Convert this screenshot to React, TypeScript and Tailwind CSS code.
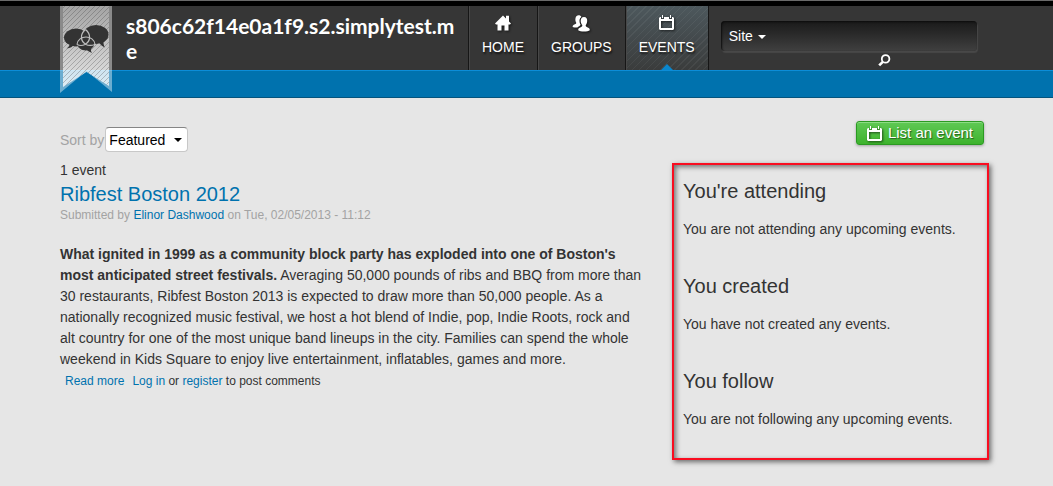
import { useState, type ReactNode } from 'react';

interface NavItem {
    label: string;
    icon: ReactNode;
}

interface SidebarBlock {
    title: string;
    text: string;
}

function HomeIcon() {
    return (
        <svg width="16" height="16" viewBox="0 0 16 16" fill="currentColor" aria-hidden="true">
            <path d="M8 0.5 L11 3.5 V0.8 H14 V6.5 L16 8.6 L15 9.6 H13.5 V15.5 H9.5 V10.5 H6.5 V15.5 H2.5 V9.6 H1 L0 8.6 Z" />
        </svg>
    );
}

function GroupsIcon() {
    return (
        <svg width="18" height="18" viewBox="0 0 18 18" fill="currentColor" aria-hidden="true">
            <path d="M6.6 0.3 C8 0.3 9 0.9 9.4 2 C7.6 3 7.3 5 7.6 7 C7.8 8.4 8.2 9.2 8.6 9.8 C8.2 11.2 6.4 11.2 5.4 12.6 C3.4 12.6 1.6 12.6 0.6 12 C0.6 10 2 9.6 3.4 9 C4.4 8.6 4.4 8 4 7.2 C3.2 6 3.2 4.4 3.6 2.8 C4 1.2 5 0.3 6.6 0.3 Z" />
            <path d="M12 2 C14.4 2 15.4 3.8 15.2 6 C15.1 7.8 14.6 9 13.8 10 C13.4 11.2 14 11.6 15.2 12.2 C16.8 12.8 17.8 13.4 17.8 15.2 C16 17 8 17 6.2 15.2 C6.2 13.4 7.2 12.8 8.8 12.2 C10 11.6 10.6 11.2 10.2 10 C9.4 9 8.8 7.8 8.7 6 C8.6 3.8 9.6 2 12 2 Z" />
        </svg>
    );
}

function CalendarIcon() {
    return (
        <svg width="15" height="15" viewBox="0 0 15 15" aria-hidden="true">
            <path
                d="M0 3 L1 2 H2 V4 H5 V2 H10 V4 H13 V2 H14 L15 3 V14 L14 15 H1 L0 14 Z M2 6 V13 H13 V6 Z"
                fill="currentColor"
                fillRule="evenodd"
            />
            <path d="M3 0 H4 V3 H3 Z M11 0 H12 V3 H11 Z" fill="currentColor" />
        </svg>
    );
}

function SearchIcon() {
    return (
        <svg width="13" height="13" viewBox="0 0 13 13" fill="none" stroke="currentColor" aria-hidden="true">
            <circle cx="7.6" cy="4.9" r="3.8" strokeWidth="1.8" />
            <path d="M4.8 7.8 L1.2 11.4" strokeWidth="2.6" />
        </svg>
    );
}

function Caret() {
    return (
        <svg width="8" height="4" viewBox="0 0 8 4" fill="currentColor" aria-hidden="true">
            <path d="M0 0 H8 L4 4 Z" />
        </svg>
    );
}

// Bookmark ribbon that hangs over the blue bar
function RibbonLogo() {
    return (
        <svg width="52" height="87" viewBox="0 0 52 87" aria-hidden="true">
            <defs>
                <linearGradient id="ribbonFill" x1="0" y1="0" x2="0" y2="1">
                    <stop offset="0" stopColor="#fff" stopOpacity="0.22" />
                    <stop offset="1" stopColor="#fff" stopOpacity="0.78" />
                </linearGradient>
                <pattern id="ribbonHatch" width="5" height="5" patternUnits="userSpaceOnUse">
                    <path d="M-1 1 L1 -1 M0 5 L5 0 M4 6 L6 4" stroke="#333" strokeOpacity="0.35" strokeWidth="0.8" />
                </pattern>
            </defs>
            <path d="M0 0 H52 V86 L26.5 65 L0 87 Z" fill="#fff" fillOpacity="0.42" />
            <path d="M3 0 H49 V80 L26.5 66 L3 81 Z" fill="url(#ribbonFill)" />
            <path d="M3 0 H49 V80 L26.5 66 L3 81 Z" fill="url(#ribbonHatch)" />
            <g fill="#333">
                <path d="M7 36 L10 38 Q9 41 6.5 42.5 Q12 42 14.5 38 Z" />
                <path d="M38 35 Q41 40 45 41.5 Q43 39 43.5 34 Z" />
                <path d="M25 42 Q28 46 32 47 Q30.5 45 31 41 Z" />
                <ellipse cx="16" cy="31.5" rx="12" ry="9" />
                <ellipse cx="36" cy="28.5" rx="12.5" ry="9.5" />
                <ellipse cx="25.8" cy="38" rx="8.5" ry="6.5" />
            </g>
            <g fill="none" stroke="#bdbdbd" strokeWidth="1.2">
                <path d="M25.5 23.5 C31 28 31 35 25 38.5 C22 40 19 39.5 17 38.5" />
                <path d="M25.5 23.5 C20 28 20 35 26 38.5 C29 40 32 39.5 35 38.5" />
                <path d="M17 38.5 C18 28.5 34 28.5 35 38.5" />
            </g>
        </svg>
    );
}

const navItems: NavItem[] = [
    { label: 'HOME', icon: <HomeIcon /> },
    { label: 'GROUPS', icon: <GroupsIcon /> },
    { label: 'EVENTS', icon: <CalendarIcon /> },
];

const blocks: SidebarBlock[] = [
    { title: "You're attending", text: 'You are not attending any upcoming events.' },
    { title: 'You created', text: 'You have not created any events.' },
    { title: 'You follow', text: 'You are not following any upcoming events.' },
];

function NavLink({ item, active }: { item: NavItem; active: boolean }) {
    return (
        <a
            href="#"
            aria-current={active ? 'page' : undefined}
            className={
                'relative flex flex-col items-center border-l border-[#161616] px-[13px] pt-[9px] text-sm text-white shadow-[inset_1px_0_0_#484848] [text-shadow:1px_2px_2px_rgba(0,0,0,0.7)] ' +
                (active
                    ? 'bg-[repeating-linear-gradient(135deg,transparent_0_4px,rgba(255,255,255,0.05)_4px_5px),linear-gradient(#4d585d,#3a3c3c)]'
                    : '')
            }
        >
            <span className="flex h-[18px] items-start drop-shadow-[1px_1px_1px_rgba(0,0,0,0.6)]">{item.icon}</span>
            <span className="mt-1 leading-5">{item.label}</span>
            {active && (
                <svg className="absolute bottom-0 left-1/2 -ml-1.5" width="12" height="6" viewBox="0 0 12 6" aria-hidden="true">
                    <path d="M0 6 L6 0 L12 6 Z" fill="#0a86cc" />
                </svg>
            )}
        </a>
    );
}

function SearchForm() {
    const [query, setQuery] = useState('');

    return (
        <form className="ml-3 mt-[15px] w-[256px]" onSubmit={(e) => e.preventDefault()}>
            <div className="flex h-[30px] items-center rounded bg-linear-to-b from-[#1a1a1a] to-[#404040] px-2 shadow-[inset_1px_1px_2px_#0c0c0c,1px_2px_1px_#484848]">
                <div className="relative flex items-center text-white">
                    <select aria-label="Search scope" className="w-[37px] appearance-none bg-transparent text-sm leading-5 outline-none">
                        <option>Site</option>
                    </select>
                    <span className="pointer-events-none absolute right-0 top-[9px]">
                        <Caret />
                    </span>
                </div>
                <input
                    type="text"
                    aria-label="Search"
                    value={query}
                    onChange={(e) => setQuery(e.target.value)}
                    className="ml-2 min-w-0 flex-1 bg-transparent text-sm text-white outline-none"
                />
            </div>
            <button type="submit" aria-label="Search" className="ml-[157px] mt-[3px] block text-white">
                <SearchIcon />
            </button>
        </form>
    );
}

function Header() {
    return (
        <header>
            <div className="h-1.5 border-t border-[#6a6a6a] bg-black" />
            <div className="flex h-16 bg-[#363636] pl-[60px]">
                <a href="#" aria-label="Front page" className="relative z-10 h-[87px] w-[52px] shrink-0">
                    <RibbonLogo />
                </a>
                <h1 className="ml-[14px] w-[342px] shrink-0 break-all pr-2 pt-[7px] font-['Lato'] text-[21px] font-bold leading-[25px] text-white">
                    <a href="#">s806c62f14e0a1f9.s2.simplytest.me</a>
                </h1>
                <nav className="flex border-r border-[#161616]">
                    {navItems.map((item) => (
                        <NavLink key={item.label} item={item} active={item.label === 'EVENTS'} />
                    ))}
                </nav>
                <SearchForm />
            </div>
            <div className="h-7 border-b border-t border-b-[#05547d] border-t-[#0c8dd8] bg-[#0072ae]" />
        </header>
    );
}

function Toolbar() {
    const [sort, setSort] = useState('Featured');

    return (
        <div className="flex items-start justify-between">
            <div className="mt-1.5 flex items-center">
                <label htmlFor="sort" className="text-sm text-[#a3a3a3]">
                    Sort by
                </label>
                <div className="relative ml-px text-black">
                    <select
                        id="sort"
                        value={sort}
                        onChange={(e) => setSort(e.target.value)}
                        className="block h-[25px] w-[83px] appearance-none rounded border border-[#c8c8c8] border-t-[#858585] bg-white pl-[3px] text-sm"
                    >
                        <option>Featured</option>
                        <option>Newest</option>
                    </select>
                    <span className="pointer-events-none absolute right-[6px] top-[11px]">
                        <Caret />
                    </span>
                </div>
            </div>
            <button
                type="button"
                className="mr-[5px] flex h-6 items-center gap-1.5 rounded-[3px] border border-[#2b9a22] bg-linear-to-b from-[#5fc954] to-[#3db32c] px-2.5 text-[15px] text-white shadow-[inset_0_1px_0_#8cdc84,0_1px_3px_rgba(0,0,0,0.3)] [text-shadow:1px_1px_1px_rgba(0,0,0,0.5)]"
            >
                <span className="drop-shadow-[1px_1px_1px_rgba(0,0,0,0.6)]">
                    <CalendarIcon />
                </span>
                List an event
            </button>
        </div>
    );
}

function EventTeaser() {
    return (
        <article>
            <h2 className="text-xl leading-[26px] text-[#0072ae]">
                <a href="#">Ribfest Boston 2012</a>
            </h2>
            <p className="text-xs leading-4 text-[#a3a3a3]">
                Submitted by{' '}
                <a href="#" className="text-[#0072ae]">
                    Elinor Dashwood
                </a>{' '}
                on Tue, 02/05/2013 - 11:12
            </p>
            <p className="mt-[21px] pr-3 text-sm leading-[21px]">
                <strong>
                    What ignited in 1999 as a community block party has exploded into one of Boston's most anticipated
                    street festivals.
                </strong>{' '}
                Averaging 50,000 pounds of ribs and BBQ from more than 30 restaurants, Ribfest Boston 2013 is expected
                to draw more than 50,000 people. As a nationally recognized music festival, we host a hot blend of
                Indie, pop, Indie Roots, rock and alt country for one of the most unique band lineups in the city.
                Families can spend the whole weekend in Kids Square to enjoy live entertainment, inflatables, games and
                more.
            </p>
            <ul className="mt-[3px] flex gap-2 pl-[5px] text-xs leading-4">
                <li>
                    <a href="#" className="text-[#0072ae]">
                        Read more
                    </a>
                </li>
                <li>
                    <a href="#" className="text-[#0072ae]">
                        Log in
                    </a>{' '}
                    or{' '}
                    <a href="#" className="text-[#0072ae]">
                        register
                    </a>{' '}
                    to post comments
                </li>
            </ul>
        </article>
    );
}

export default function App() {
    return (
        <div className="min-h-screen bg-[#e6e6e6] font-['Liberation_Sans',Arial,sans-serif] text-[#333]">
            <Header />
            <div className="pb-6 pl-[60px] pr-16 pt-[23px]">
                <Toolbar />
                <div className="mt-2 flex items-start gap-3">
                    <main className="min-w-0 flex-1">
                        <p className="text-sm leading-[21px]">1 event</p>
                        <EventTeaser />
                    </main>
                    <aside className="mt-[3px] flex w-[317px] shrink-0 flex-col gap-8 border-2 border-[#f90d20] pb-7 pl-[9px] pt-3 shadow-[2px_2px_5px_rgba(0,0,0,0.55),inset_2px_2px_5px_rgba(0,0,0,0.5)]">
                        {blocks.map((block) => (
                            <section key={block.title}>
                                <h2 className="text-xl leading-7">{block.title}</h2>
                                <p className="mt-3.5 text-sm leading-[21px]">{block.text}</p>
                            </section>
                        ))}
                    </aside>
                </div>
            </div>
        </div>
    );
}
